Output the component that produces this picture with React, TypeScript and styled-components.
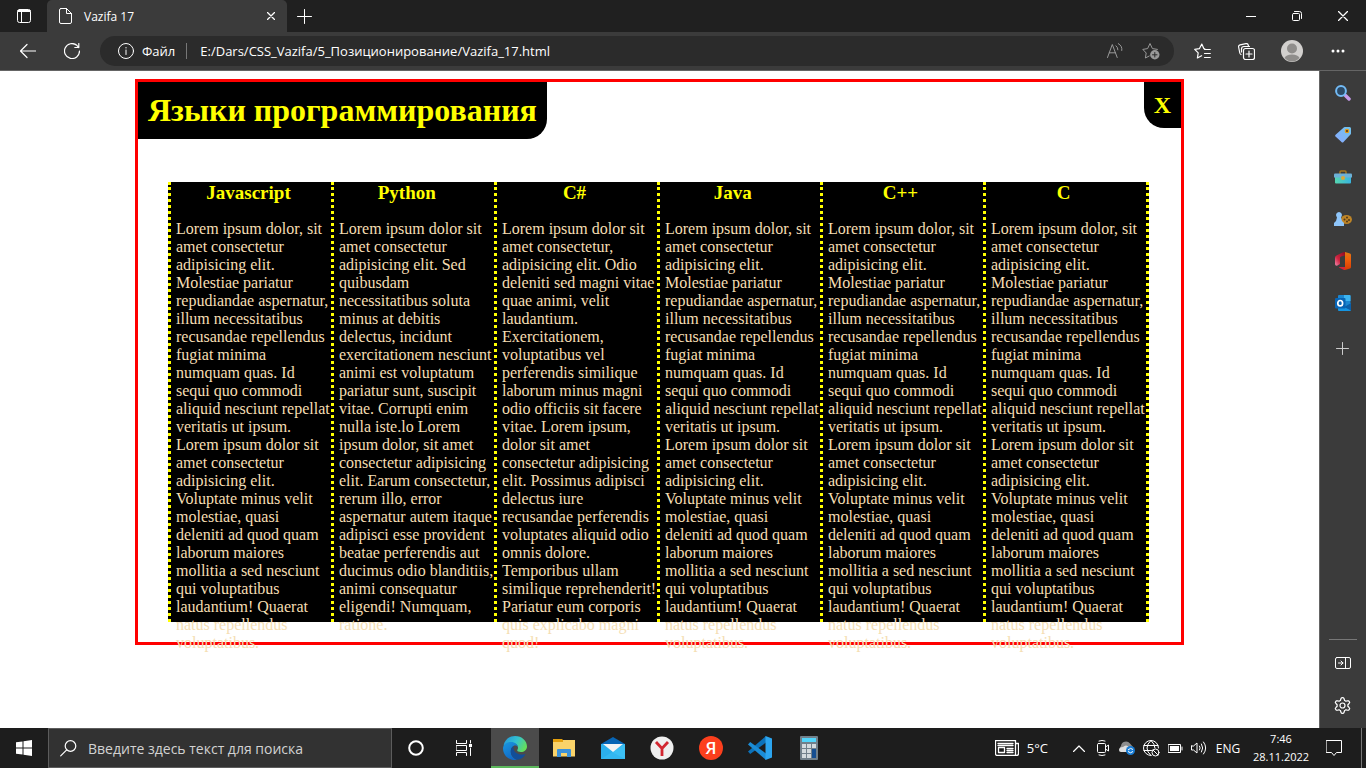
import React from "react";
import styled, { createGlobalStyle, css } from "styled-components";

const Global = createGlobalStyle`
  *, *::before, *::after { box-sizing: border-box; }
  body { margin: 0; background: #fff; }
  button { border: 0; padding: 0; margin: 0; background: transparent; color: inherit; font: inherit; }
  h1, h2, p { margin: 0; }
  svg { display: block; flex: none; }
`;

const Screen = styled.div`
  display: flex;
  flex-direction: column;
  min-height: 100vh;
  font-family: "Open Sans", "Noto Sans", sans-serif;
  color: #fff;
`;

const TitleBar = styled.header`
  display: flex;
  align-items: stretch;
  height: 32px;
  background: #202020;
`;

const IconButton = styled.button<{ $w?: number }>`
  display: flex;
  align-items: center;
  justify-content: center;
  flex: none;
  width: ${(p) => p.$w ?? 44}px;
`;

const Tab = styled.div`
  display: flex;
  align-items: center;
  gap: 12px;
  width: 240px;
  padding: 0 8px 0 12px;
  border-radius: 5px 5px 0 0;
  background: #3b3b3b;
  font-size: 12px;
`;

const TabTitle = styled.span`
  flex: 1;
`;

const Spacer = styled.div`
  flex: 1;
`;

const Toolbar = styled.div`
  display: flex;
  align-items: stretch;
  height: 39px;
  padding: 0 6px;
  background: #3b3b3b;
  border-bottom: 1px solid #656565;
`;

const AddressBar = styled.div`
  display: flex;
  align-items: center;
  flex: 1;
  height: 30px;
  margin: 4px 6px 0;
  padding: 0 5px 0 18px;
  border-radius: 15px;
  background: #2b2b2b;
  font-size: 13px;
`;

const SchemeLabel = styled.span`
  margin-left: 8px;
  padding-right: 11px;
  line-height: 16px;
  border-right: 1px solid #777;
`;

const AddressInput = styled.input`
  flex: 1;
  min-width: 0;
  margin-left: 13px;
  padding: 0;
  border: 0;
  outline: 0;
  background: transparent;
  color: #fff;
  font: inherit;
`;

const Body = styled.div`
  display: flex;
  flex: 1;
`;

const Page = styled.main`
  flex: 1;
  padding-top: 8px;
  background: #fff;
  font-family: "Liberation Serif", serif;
`;

const Frame = styled.section`
  width: calc(100% - 32px);
  max-width: 1049px;
  height: 566px;
  margin: 0 auto;
  border: 3px solid #f00;
`;

const FrameHead = styled.div`
  display: flex;
  justify-content: space-between;
  align-items: flex-start;
  color: #ff0;
`;

const Title = styled.h1`
  padding: 10px;
  border-bottom-right-radius: 20px;
  background: #000;
  font-size: 32px;
  line-height: 37px;
`;

const CloseBox = styled.button`
  && {
    width: 37px;
    height: 46px;
    border-bottom-left-radius: 20px;
    background: #000;
    font-size: 24px;
    font-weight: bold;
    line-height: 24px;
  }
`;

const Columns = styled.div`
  display: grid;
  grid-template-columns: repeat(6, 1fr);
  height: 440px;
  margin: 43px 32px 0 30px;
  border-right: 3px dotted #ff0;
  background: #000;
`;

const Column = styled.article`
  height: 440px;
  border-left: 3px dotted #ff0;
`;

const ColumnTitle = styled.h2`
  margin: 0 5px 16px 0;
  text-align: center;
  color: #ff0;
  font-size: 19px;
  line-height: 22px;
`;

const ColumnText = styled.p`
  margin-left: 5px;
  color: wheat;
  font-size: 16px;
  line-height: 18px;
`;

const Sidebar = styled.aside`
  display: flex;
  flex-direction: column;
  width: 47px;
  padding: 1px 1px 2px 0;
  background: #3b3b3b;
  border-left: 1px solid #656565;
`;

const SideButton = styled.button<{ $h?: number }>`
  display: flex;
  align-items: center;
  justify-content: center;
  width: 100%;
  height: ${(p) => p.$h ?? 42}px;
`;

const SideRule = styled.div`
  height: 1px;
  margin: 0 8px 2px 9px;
  background: #777;
`;

const Taskbar = styled.footer`
  display: flex;
  align-items: stretch;
  height: 40px;
  background: #1d1d1d;
`;

const SearchBox = styled.label`
  display: flex;
  align-items: center;
  gap: 11px;
  width: 344px;
  padding: 0 11px;
  border: 1px solid #5c5c5c;
  background: #323232;
`;

const SearchInput = styled.input`
  flex: 1;
  min-width: 0;
  padding: 0;
  border: 0;
  outline: 0;
  background: transparent;
  color: #fff;
  font: inherit;
  font-size: 14px;
  &::placeholder { color: #d2d2d2; opacity: 1; }
`;

const TaskButton = styled(IconButton)<{ $active?: boolean }>`
  ${(p) =>
    p.$active &&
    css`
      background: #4b4b4b;
      box-shadow: inset 0 -2px #5cb85c;
    `}
`;

const PinnedApps = styled.nav`
  display: flex;
  margin-left: 3px;
`;

const Weather = styled.button`
  display: flex;
  align-items: center;
  gap: 8px;
  margin-right: 19px;
  && { font-size: 13px; }
`;

const Clock = styled.div`
  width: 72px;
  text-align: center;
  font-size: 11px;
  line-height: 18px;
  padding-top: 2px;
`;

const Lang = styled.button`
  width: 34px;
  && { font-size: 12px; }
`;

const ShowDesktop = styled.div`
  width: 5px;
  margin-left: 10px;
  border-left: 1px solid #777;
`;

const Line = ({ w = 16, h = w, d, c = "#fff", sw = 1, children }: {
  w?: number; h?: number; d?: string; c?: string; sw?: number; children?: React.ReactNode;
}) => (
  <svg width={w} height={h} viewBox={`0 0 ${w} ${h}`} fill="none" stroke={c} strokeWidth={sw} strokeLinecap="round" strokeLinejoin="round" aria-hidden="true">
    {d && <path d={d} />}
    {children}
  </svg>
);

const Art = ({ w = 18, h = w, children }: { w?: number; h?: number; children: React.ReactNode }) => (
  <svg width={w} height={h} viewBox={`0 0 ${w} ${h}`} aria-hidden="true">{children}</svg>
);

const common =
  "Lorem ipsum dolor, sit amet consectetur adipisicing elit. Molestiae pariatur repudiandae aspernatur, illum necessitatibus recusandae repellendus fugiat minima numquam quas. Id sequi quo commodi aliquid nesciunt repellat veritatis ut ipsum. Lorem ipsum dolor sit amet consectetur adipisicing elit. Voluptate minus velit molestiae, quasi deleniti ad quod quam laborum maiores mollitia a sed nesciunt qui voluptatibus laudantium! Quaerat natus repellendus voluptatibus.";

const languages = [
  { name: "Javascript", text: common },
  {
    name: "Python\u00a0\u00a0",
    text: "Lorem ipsum dolor sit amet consectetur adipisicing elit. Sed quibusdam necessitatibus soluta minus at debitis delectus, incidunt exercitationem nesciunt animi est voluptatum pariatur sunt, suscipit vitae. Corrupti enim nulla iste.lo Lorem ipsum dolor, sit amet consectetur adipisicing elit. Earum consectetur, rerum illo, error aspernatur autem itaque adipisci esse provident beatae perferendis aut ducimus odio blanditiis, animi consequatur eligendi! Numquam, ratione.",
  },
  {
    name: "C#",
    text: "Lorem ipsum dolor sit amet consectetur, adipisicing elit. Odio deleniti sed magni vitae quae animi, velit laudantium. Exercitationem, voluptatibus vel perferendis similique laborum minus magni odio officiis sit facere vitae. Lorem ipsum, dolor sit amet consectetur adipisicing elit. Possimus adipisci delectus iure recusandae perferendis voluptates aliquid odio omnis dolore. Temporibus ullam similique reprehenderit! Pariatur eum corporis quis explicabo magni quod!",
  },
  { name: "Java\u00a0\u00a0", text: common },
  { name: "C++", text: common },
  { name: "C", text: common },
];

const gear = Array.from({ length: 48 }, (_, i) => {
  const a = (i / 48) * Math.PI * 2;
  const r = 6.6 + 1.2 * Math.max(-1, Math.min(1, 1.7 * Math.cos(6 * a)));
  return `${i ? "L" : "M"}${(8.5 + r * Math.sin(a)).toFixed(2)} ${(8.5 - r * Math.cos(a)).toFixed(2)}`;
}).join("") + "Z";

export default function App() {
  return (
    <Screen>
      <Global />
      <TitleBar>
        <IconButton $w={47} aria-label="Меню вкладок">
          <Line w={14}>
            <rect x="0.5" y="0.5" width="13" height="13" rx="2" />
            <path d="M1 2.5H13M1 1.5H13M4.5 3V13" />
          </Line>
        </IconButton>
        <Tab>
          <Line w={13} h={16} d="M2 .5H7.5L12.500 5.500V14Q12.500 15.500 11 15.500H2Q.5 15.500 .5 14V2Q.5 .5 2 .5ZM7.500 .5V5.500H12.500" />
          <TabTitle>Vazifa 17</TabTitle>
          <IconButton $w={16} aria-label="Закрыть вкладку">
            <Line w={8} sw={1.3} d="M.5 .5L7.500 7.500M7.500 .5L.5 7.500" />
          </IconButton>
        </Tab>
        <IconButton $w={35} aria-label="Новая вкладка">
          <Line w={15} d="M7.500 .5V14.500M.5 7.500H14.500" />
        </IconButton>
        <Spacer />
        <IconButton $w={46} aria-label="Свернуть">
          <Line w={10} d="M0 5.500H10" />
        </IconButton>
        <IconButton $w={46} aria-label="Восстановить">
          <Line w={10}>
            <rect x="0.5" y="2.500" width="7" height="7" rx="1" />
            <path d="M2.500 .5H7.500Q9.500 .5 9.500 2.500V7.500" />
          </Line>
        </IconButton>
        <IconButton $w={46} aria-label="Закрыть">
          <Line w={10} sw={1.3} d="M.5 .5L9.500 9.500M9.500 .5L.5 9.500" />
        </IconButton>
      </TitleBar>

      <Toolbar>
        <IconButton aria-label="Назад">
          <Line w={16} sw={1.2} d="M15.500 8H.5M7 1.500L.5 8L7 14.500" />
        </IconButton>
        <IconButton aria-label="Обновить">
          <Line w={16} sw={1.2} d="M15.500 8A7.500 7.500 0 1 1 12.800 2.300L14.800 4.500M14.800 .5V4.500H10.800" />
        </IconButton>
        <AddressBar>
          <Line w={16}>
            <circle cx="8" cy="8" r="7.500" />
            <path d="M8 7V11.500M8 4.500V5" />
          </Line>
          <SchemeLabel>Файл</SchemeLabel>
          <AddressInput aria-label="Адрес" defaultValue="E:/Dars/CSS_Vazifa/5_Позиционирование/Vazifa_17.html" />
          <IconButton $w={36} aria-label="Прочесть вслух">
            <Line w={16} c="#999" d="M.5 14.500L5.300 1.500L10.200 14.500M2.300 9.800H8.400M9 2.800Q11 4.300 10.900 6.800M11.300 .6Q15.600 3 14.800 7.500" />
          </IconButton>
          <IconButton $w={36} aria-label="Добавить в избранное">
            <Line w={18} c="#999">
              <path d="M7.200 14L3.400 16L4.200 11L.8 7.400L5.600 6.600L8 1.500L10.400 6.600L15.400 7.400" />
              <circle cx="12.800" cy="12.800" r="4.700" fill="#999" stroke="none" />
              <path d="M12.800 10.500V15M10.500 12.800H15" stroke="#2b2b2b" />
            </Line>
          </IconButton>
        </AddressBar>
        <IconButton aria-label="Избранное">
          <Line w={17} sw={1.2} d="M10.800 5.800L9.800 5.600L7.800 1L5.500 5.600L.7 6.300L4.200 9.800L3.400 15L7.600 12.700M10.500 6.500H16.300M10.500 10.500H16.300M10.500 14.500H16.300" />
        </IconButton>
        <IconButton aria-label="Коллекции">
          <Line w={17} sw={1.2}>
            <path d="M3 11.500Q2 11 1.800 10L.6 4Q.3 2.300 2 1.800L8 .6Q9.700 .3 10.200 2L10.500 3M3.500 9V6Q3.500 3.500 6 3.500H11.500" />
            <rect x="5.500" y="5.500" width="11" height="11" rx="2" />
            <path d="M11 8V14M8 11H14" />
          </Line>
        </IconButton>
        <IconButton $w={48} aria-label="Профиль">
          <Art w={22}>
            <circle cx="11" cy="11" r="11" fill="#d2d0ce" />
            <circle cx="11" cy="8.500" r="5" fill="#8f8d8b" />
            <path d="M3.500 18Q5 14.500 11 14.500T18.500 18Q15 21.500 11 21.500T3.500 18Z" fill="#8f8d8b" />
          </Art>
        </IconButton>
        <IconButton aria-label="Настройки и прочее">
          <Art w={14} h={4}>
            <circle cx="2" cy="2" r="1.500" fill="#fff" />
            <circle cx="7" cy="2" r="1.500" fill="#fff" />
            <circle cx="12" cy="2" r="1.500" fill="#fff" />
          </Art>
        </IconButton>
      </Toolbar>

      <Body>
        <Page>
          <Frame>
            <FrameHead>
              <Title>Языки программирования</Title>
              <CloseBox>X</CloseBox>
            </FrameHead>
            <Columns>
              {languages.map((l) => (
                <Column key={l.name}>
                  <ColumnTitle>{l.name}</ColumnTitle>
                  <ColumnText>{l.text}</ColumnText>
                </Column>
              ))}
            </Columns>
          </Frame>
        </Page>
        <Sidebar>
          <SideButton aria-label="Поиск">
            <Art w={16}>
              <path d="M10.500 10.500L14 14" stroke="#c69bea" strokeWidth="3.500" strokeLinecap="round" />
              <circle cx="6" cy="6" r="4.900" fill="#2c4a66" stroke="#73bbf6" strokeWidth="2" />
            </Art>
          </SideButton>
          <SideButton aria-label="Покупки">
            <Art w={16}>
              <defs><linearGradient id="tag" x1="1" y1="0" x2="0" y2="1"><stop stopColor="#6fc4ec" /><stop offset="1" stopColor="#8aa9ff" /></linearGradient></defs>
              <path d="M9 .3Q9.500 0 10 0H14.500Q16 0 16 1.500V6.500Q16 7 15.500 7.500L8.500 15Q7.500 16 6.500 15L.5 9.500Q-.3 8.500 .6 7.800Z" fill="url(#tag)" />
              <circle cx="12" cy="4" r="1.700" fill="#533b20" stroke="#e69a16" strokeWidth="1.200" />
            </Art>
          </SideButton>
          <SideButton aria-label="Инструменты">
            <Art w={18} h={14}>
              <defs><linearGradient id="box"><stop stopColor="#56d6b0" /><stop offset="1" stopColor="#38b5e0" /></linearGradient></defs>
              <path d="M6 4V2Q6 1 7 1H11Q12 1 12 2V4" fill="none" stroke="#a8781f" strokeWidth="1.500" />
              <rect x="1" y="4" width="16" height="9.500" rx="1" fill="url(#box)" />
              <path d="M0 4.500Q0 3.500 1 3.500H17Q18 3.500 18 4.500V7.500H0Z" fill="#6db0d6" />
              <circle cx="9" cy="8" r="2" fill="#d9a93a" />
            </Art>
          </SideButton>
          <SideButton aria-label="Игры">
            <Art w={18} h={14}>
              <ellipse cx="12.500" cy="7.500" rx="5.500" ry="4.500" fill="#bd8427" />
              <g fill="#513718"><circle cx="10.500" cy="7.500" r="1" /><circle cx="13" cy="5.500" r="1" /><circle cx="15" cy="8" r="1" /><circle cx="13" cy="9.500" r="1" /></g>
              <path d="M5 0A3 3 0 0 1 7.500 4.500L7 5.500L8 9L10 11V14H0V11L2 9L3 5.500L2.500 4.500A3 3 0 0 1 5 0Z" fill="#8ec5fa" />
            </Art>
          </SideButton>
          <SideButton aria-label="Office">
            <Art w={16} h={18}>
              <defs>
                <linearGradient id="of1" x1="0" y1="0" x2="0" y2="1"><stop stopColor="#e07a12" /><stop offset=".4" stopColor="#f0600c" /><stop offset="1" stopColor="#d83b01" /></linearGradient>
                <linearGradient id="of2" x1="1" y1="0" x2="0" y2="1"><stop stopColor="#8c0c20" /><stop offset=".6" stopColor="#cf2440" /><stop offset="1" stopColor="#f08ab0" /></linearGradient>
              </defs>
              <path d="M10 0L15 1.500Q16 1.800 16 3V15Q16 16.200 15 16.500L10 18Z" fill="url(#of1)" />
              <path d="M10 0V3.500L6 4.500Q5 4.800 5 6V12L2 13.800Q0 14 0 12V6Q0 4.500 1.500 3.600L7.500 .4Q8.500 0 10 0Z" fill="url(#of2)" />
              <path d="M4 15H10V18Q9 18 8 17.500L4 15.600Z" fill="#d52639" />
            </Art>
          </SideButton>
          <SideButton aria-label="Outlook">
            <Art w={16}>
              <rect x="3" y="0" width="12.500" height="11" rx="1" fill="#1b86d0" />
              <path d="M9 0H14.500Q15.500 0 15.500 1V6H9Z" fill="#3cb4f0" />
              <path d="M3 9L10 11L16 8V15Q16 16 15 16H4Q3 16 3 15Z" fill="#1595e2" />
              <path d="M9 12L16 8V15.500Z" fill="#0b5fa8" />
              <rect x="0" y="3" width="10.500" height="10.500" rx="1" fill="#0864b4" />
              <ellipse cx="5.200" cy="8.200" rx="2.400" ry="2.700" fill="none" stroke="#fff" strokeWidth="1.700" />
            </Art>
          </SideButton>
          <SideButton $h={48} aria-label="Добавить">
            <Line w={13} c="#ccc" d="M6.500 .5V12.500M.5 6.500H12.500" />
          </SideButton>
          <Spacer />
          <SideRule />
          <SideButton aria-label="Скрыть боковую панель">
            <Line w={16} h={12}>
              <rect x="0.5" y="0.5" width="15" height="11" rx="1.500" />
              <path d="M10.500 1V11M3.500 6H8M6 4L8 6L6 8" />
            </Line>
          </SideButton>
          <SideButton aria-label="Настройки">
            <Line w={17} sw={1.2} d={gear}><circle cx="8.500" cy="8.500" r="2.500" /></Line>
          </SideButton>
        </Sidebar>
      </Body>

      <Taskbar>
        <IconButton $w={48} aria-label="Пуск">
          <Art w={16}>
            <path d="M0 2.300L6.500 1.400V7.500H0ZM7.500 1.200L16 0V7.500H7.500ZM0 8.500H6.500V14.600L0 13.700ZM7.500 8.500H16V16L7.500 14.800Z" fill="#fff" />
          </Art>
        </IconButton>
        <SearchBox>
          <Line w={17} sw={1.2}><circle cx="10.500" cy="6" r="5.300" /><path d="M6.700 9.800L.7 15.800" /></Line>
          <SearchInput aria-label="Поиск" placeholder="Введите здесь текст для поиска" />
        </SearchBox>
        <TaskButton $w={48} aria-label="Кортана">
          <Line w={16} sw={2}><circle cx="8" cy="8" r="6.800" /></Line>
        </TaskButton>
        <TaskButton $w={48} aria-label="Представление задач">
          <Line w={16} d="M.5 .5V3.500H10.500V.5M.5 5.500H10.500V10.500H.5ZM.5 15.500V12.500H10.500V15.500M14.500 .5V3M14.500 8V15.500">
            <rect x="13" y="4" width="3" height="3" fill="#fff" stroke="none" />
          </Line>
        </TaskButton>
        <PinnedApps>
          <TaskButton $w={48} $active aria-label="Edge">
            <Art w={24}>
              <defs>
                <linearGradient id="e1" x1="0" y1=".2" x2="1" y2=".6"><stop offset="0" stopColor="#2597d8" /><stop offset=".5" stopColor="#33c2d2" /><stop offset="1" stopColor="#66e058" /></linearGradient>
                <linearGradient id="e2" x1="0" y1="0" x2=".5" y2="1"><stop offset="0" stopColor="#1a98e0" /><stop offset="1" stopColor="#1169c6" /></linearGradient>
              </defs>
              <path d="M.5 9.500C2 3.500 6.500 0 12 0C19 0 24 5 24 10.500C24 14 21 16 18 16C15 16 13.500 15 14.500 13.500C16 11 14 7 9.500 7C5 7 1.500 9 .5 9.500Z" fill="url(#e1)" />
              <path d="M0 12C.5 8 4.500 6 8 6C12 6 15 8.500 15 11.500C14.500 9.500 12 9 10.500 10C6 13 7 21 14 23.800Q13 24 12 24C5 24 0 19 0 12Z" fill="url(#e2)" />
              <path d="M10.500 10C6 13 7 21 14 23.800C18 23.500 21 21 22.500 18C16.500 20 9.500 17 10.500 10Z" fill="#124e98" />
            </Art>
          </TaskButton>
          <TaskButton $w={49} aria-label="Проводник">
            <Art w={22} h={18}>
              <path d="M0 1H22V17.500H0Z" fill="#fad36a" />
              <path d="M0 0H9L10 1V3H0Z" fill="#e5a00d" />
              <path d="M4 18V11Q4 10 5 10H17Q18 10 18 11V18H14V14H8V18Z" fill="#3c92da" />
            </Art>
          </TaskButton>
          <TaskButton $w={49} aria-label="Почта">
            <Art w={24} h={22}>
              <path d="M0 7L12 0L24 7V12H0Z" fill="#0865b5" />
              <path d="M0 7H24V22H0Z" fill="#2bafec" />
              <path d="M24 7V22L11 15Z" fill="#3cc0f5" />
              <path d="M0 22L24 7V22Z" fill="#3cc0f5" opacity=".5" />
              <path d="M2 7H22L12 15Z" fill="#f5f5f5" />
            </Art>
          </TaskButton>
          <TaskButton $w={49} aria-label="Яндекс Браузер">
            <Art w={24}>
              <circle cx="12" cy="12" r="11.500" fill="#efefef" />
              <path d="M6 6L12 12.500L18 6M12 12V20" stroke="#d22630" strokeWidth="2.800" fill="none" />
            </Art>
          </TaskButton>
          <TaskButton $w={49} aria-label="Яндекс">
            <Art w={24}>
              <circle cx="12" cy="12" r="12" fill="#fc3f1d" />
              <text x="12" y="18" textAnchor="middle" fill="#fff" fontFamily="Open Sans, sans-serif" fontWeight="600" fontSize="17">Я</text>
            </Art>
          </TaskButton>
          <TaskButton $w={49} aria-label="Visual Studio Code">
            <Art w={24}>
              <path d="M0 15.500L2.200 18L18 6.500V0Z" fill="#0c72ba" />
              <path d="M0 8.500L2.200 6L18 17.500V24Z" fill="#1b8cd6" />
              <path d="M17.500 0L24 2.500V21.500L17.500 24Z" fill="#2ca5ef" />
            </Art>
          </TaskButton>
          <TaskButton $w={49} aria-label="Калькулятор">
            <Art w={18} h={24}>
              <rect width="18" height="24" rx="1" fill="#71808b" />
              <rect x="2" y="2" width="14" height="4" fill="#52d5fb" />
              <path d="M2 8H6V12H2ZM7 8H11V12H7ZM12 8H16V12H12ZM2 13H6V17H2ZM7 13H11V17H7ZM2 18H6V22H2ZM7 18H11V22H7Z" fill="#d3dade" />
              <rect x="12" y="13" width="4" height="9" fill="#154e91" />
            </Art>
          </TaskButton>
        </PinnedApps>
        <Spacer />
        <Weather>
          <Line w={24} h={16} sw={1.3}>
            <path d="M.5 .5H20.500V15.500H2.500Q.5 15.500 .5 13.500ZM20.500 3.500H23.500V13.500Q23.500 15.500 21.500 15.500H18M3 3.500H18M3 5.500H18M12 8.500H18M12 10.500H18M12 12.500H18" />
            <rect x="3.500" y="7.500" width="6" height="5" />
          </Line>
          5°C
        </Weather>
        <IconButton $w={24} aria-label="Скрытые значки"><Line w={12} h={7} sw={1.2} d="M.5 6.500L6 1L11.500 6.500" /></IconButton>
        <IconButton $w={24} aria-label="Камера">
          <Line w={12} h={16} d="M2 1Q5 -.2 8 1M2 15Q5 16.200 8 15M8.500 7L11.500 5V11L8.500 9">
            <rect x="0.5" y="3.500" width="8" height="9" rx="1" />
          </Line>
        </IconButton>
        <IconButton $w={24} aria-label="OneDrive">
          <Art w={16} h={14}>
            <path d="M3 10A3 3 0 0 1 2 5A5 5 0 0 1 11 2.500L14 6V10Z" fill="#8d8d8d" />
            <path d="M0 9Q0 6 4 6Q7 3 10 6V11H2Q0 11 0 9Z" fill="#dedede" />
            <circle cx="11.500" cy="9.500" r="4.500" fill="#187cd4" />
            <path d="M9 9Q11.500 6 14 8.500M14 10.500Q11.500 13 9 10.500" stroke="#fff" fill="none" />
          </Art>
        </IconButton>
        <IconButton $w={24} aria-label="Сеть">
          <Line w={17}>
            <path d="M15.500 8A7.500 7.500 0 1 0 8 15.500M8 .5Q4 4 4 8T8 15.500M8 .5Q12 4 12 8M1 5.500H15M1 10.500H8.500" />
            <circle cx="12.500" cy="12.500" r="3.500" /><path d="M10 10L15 15" />
          </Line>
        </IconButton>
        <IconButton $w={24} aria-label="Батарея">
          <Line w={15} h={9}><rect x="0.5" y="0.5" width="12" height="8" /><rect x="2" y="2" width="9" height="5" fill="#fff" stroke="none" /><path d="M14 3V6" /></Line>
        </IconButton>
        <IconButton $w={24} aria-label="Громкость">
          <Line w={16} h={14} d="M.5 5V9H2.500L6 12V2L2.500 5ZM8.500 5Q10 7 8.500 9M10.500 3Q13 7 10.500 11M12.500 1Q17 7 12.500 13" />
        </IconButton>
        <Lang>ENG</Lang>
        <Clock>7:46<br />28.11.2022</Clock>
        <IconButton $w={34} aria-label="Уведомления">
          <Line w={16} h={16} d="M.5 .5H15.500V12.500H10.500L8 15.500L5.500 12.500H.5Z" />
        </IconButton>
        <ShowDesktop />
      </Taskbar>
    </Screen>
  );
}
